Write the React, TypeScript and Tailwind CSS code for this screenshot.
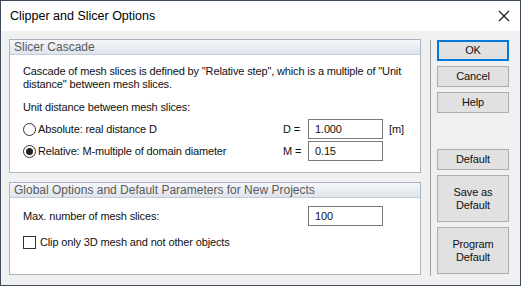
import React from "react";

const font = { fontFamily: '"Liberation Sans", Arial, sans-serif' };

const GroupBox = ({ title, className, children }: { title: string; className?: string; children: React.ReactNode }) => (
  <div className={`border border-[#a9b4c2] bg-white ${className ?? ""}`}>
    <div className="h-[15px] border-b border-[#c5ccd6] bg-gradient-to-b from-[#f5f7fa] to-[#dfe4ec] pl-[4px] text-[12px] leading-[15px] tracking-normal text-[#5a5a5a]">
      {title}
    </div>
    {children}
  </div>
);

const Radio = ({ checked, label }: { checked?: boolean; label: string }) => (
  <div className="flex items-center gap-[2px]">
    <span className="flex h-[13px] w-[13px] items-center justify-center rounded-full border border-[#333] bg-white">
      {checked && <span className="h-[7px] w-[7px] rounded-full bg-[#222]" />}
    </span>
    <span>{label}</span>
  </div>
);

const Field = ({ value }: { value: string }) => (
  <div className="flex h-[20px] w-[75px] items-center border border-[#7a7a7a] bg-white pl-[6px]">{value}</div>
);

const Button = ({ children, primary, className }: { children: React.ReactNode; primary?: boolean; className?: string }) => (
  <div
    className={`flex w-[72px] items-center justify-center text-center leading-[13px] text-[#111] ${
      primary ? "border-2 border-[#0078d7] bg-[#e1e1e1]" : "border border-[#adadad] bg-[#e1e1e1]"
    } ${className ?? ""}`}
  >
    {children}
  </div>
);

export default function App() {
  return (
    <div
      className="h-[286px] w-[521px] overflow-hidden whitespace-nowrap border border-[#3c4a5a] bg-[#f0f0f0] text-[11px] tracking-[-0.14px] text-[#111]"
      style={font}
    >
      {/* title bar */}
      <div className="flex h-[30px] items-center justify-between bg-white pl-[9px] pr-[10px] tracking-normal">
        <span className="text-[12.5px] text-black">Clipper and Slicer Options</span>
        <svg width="12" height="12" viewBox="0 0 12 12">
          <path d="M1 1 L11 11 M11 1 L1 11" stroke="#111" strokeWidth="1.1" />
        </svg>
      </div>

      <div className="flex">
        {/* left groups */}
        <div className="w-[420px] pl-[8px] pt-[8px]">
          <GroupBox title="Slicer Cascade" className="h-[134px]">
            <div className="px-[13px] pt-[10px]">
              <div className="leading-[13px]">
                Cascade of mesh slices is defined by "Relative step", which is a multiple of "Unit
                <br />
                distance" between mesh slices.
              </div>
              <div className="mt-[10px] leading-[13px]">Unit distance between mesh slices:</div>
              <div className="mt-[5px] flex h-[20px] items-center">
                <div className="w-[260px]">
                  <Radio label="Absolute: real distance D" />
                </div>
                <span className="w-[25px]">D =</span>
                <Field value="1.000" />
                <span className="ml-[6px]">[m]</span>
              </div>
              <div className="mt-[2px] flex h-[20px] items-center">
                <div className="w-[260px]">
                  <Radio checked label="Relative: M-multiple of domain diameter" />
                </div>
                <span className="w-[25px]">M =</span>
                <Field value="0.15" />
              </div>
            </div>
          </GroupBox>

          <GroupBox title="Global Options and Default Parameters for New Projects" className="mt-[9px] h-[93px]">
            <div className="px-[13px] pt-[8px]">
              <div className="flex h-[20px] items-center">
                <span className="w-[285px]">Max. number of mesh slices:</span>
                <Field value="100" />
              </div>
              <div className="mt-[10px] flex h-[13px] items-center gap-[4px]">
                <span className="h-[13px] w-[13px] border border-[#333] bg-white" />
                <span>Clip only 3D mesh and not other objects</span>
              </div>
            </div>
          </GroupBox>
        </div>

        {/* separator */}
        <div className="ml-[9px] mt-[9px] h-[236px] w-px bg-[#a0a0a0]" />

        {/* buttons */}
        <div className="ml-[6px] flex flex-col pt-[9px]">
          <Button primary className="h-[21px]">OK</Button>
          <Button className="mt-[5px] h-[21px]">Cancel</Button>
          <Button className="mt-[5px] h-[21px]">Help</Button>
          <Button className="mt-[36px] h-[21px]">Default</Button>
          <Button className="mt-[5px] h-[47px]">
            Save as
            <br />
            Default
          </Button>
          <Button className="mt-[5px] h-[47px]">
            Program
            <br />
            Default
          </Button>
        </div>
      </div>
    </div>
  );
}
